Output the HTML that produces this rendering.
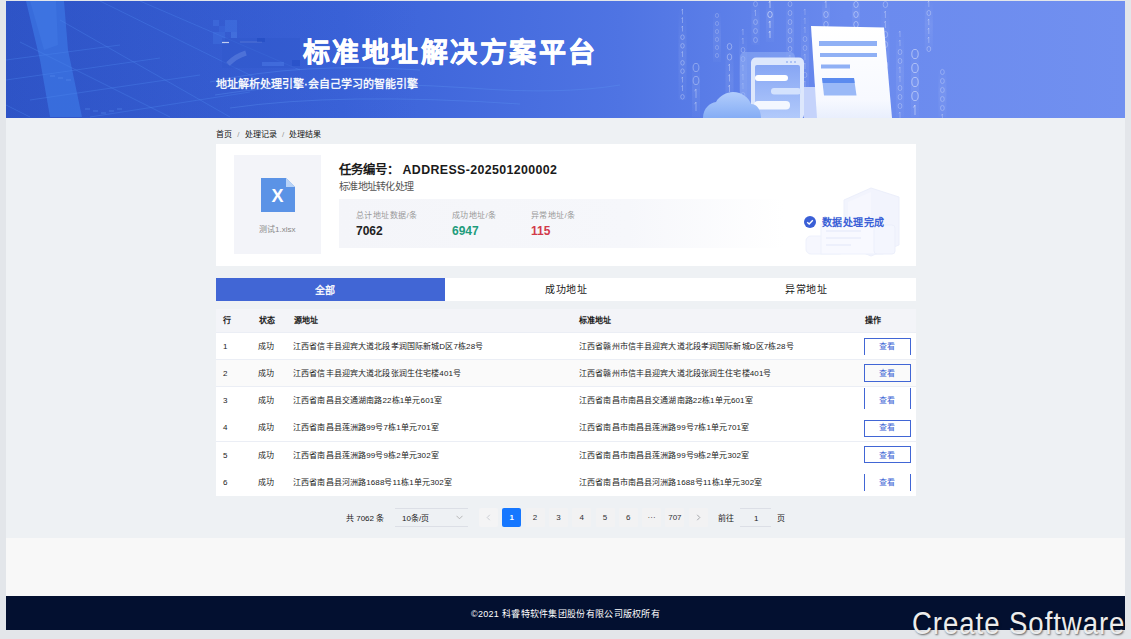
<!DOCTYPE html>
<html lang="zh-CN"><head><meta charset="utf-8">
<style>
*{margin:0;padding:0;box-sizing:border-box}
html,body{width:1131px;height:639px;overflow:hidden;background:#e3e6ea;font-family:"Liberation Sans",sans-serif}
.abs{position:absolute}
#page{position:absolute;left:6px;top:1px;width:1119px;height:629px;background:#eef1f4;overflow:hidden}
#banner{position:absolute;left:0;top:0;width:1119px;height:117px;background:linear-gradient(90deg,#2f55c8 0%,#3a62d8 30%,#4f74e3 55%,#6a8aee 75%,#7190f0 100%);overflow:hidden}
#lower{position:absolute;left:0;top:537px;width:1119px;height:58px;background:#f8f8f8}
#footer{position:absolute;left:0;top:595px;width:1119px;height:34px;background:#031030;color:#fff;font-size:9px}
.t{position:absolute;white-space:nowrap;line-height:1}
#table .t{margin-top:0.7px;letter-spacing:0.13px}
#pager .t{margin-top:1px}
#footer .t{margin-top:1px;letter-spacing:0.3px}
</style></head><body>
<div id="page">
  <div id="banner">

    <svg class="abs" style="left:0;top:0" width="1119" height="117" viewBox="6 1 1119 117">
      <defs>
        <linearGradient id="col" x1="0" y1="0" x2="1" y2="0"><stop offset="0" stop-color="#4a8ae8" stop-opacity="0"/><stop offset="0.3" stop-color="#4a8ae8" stop-opacity="0.35"/><stop offset="0.7" stop-color="#4a8ae8" stop-opacity="0.35"/><stop offset="1" stop-color="#4a8ae8" stop-opacity="0"/></linearGradient>
        <linearGradient id="cloud" x1="0" y1="0" x2="0" y2="1"><stop offset="0" stop-color="#b2cdfc"/><stop offset="1" stop-color="#85adf5"/></linearGradient>
        <linearGradient id="scr" x1="0" y1="0" x2="0" y2="1"><stop offset="0" stop-color="#87a6f4"/><stop offset="1" stop-color="#b3cbfb"/></linearGradient>
        <linearGradient id="paper" x1="0" y1="0" x2="0" y2="1"><stop offset="0" stop-color="#ffffff"/><stop offset="0.8" stop-color="#f7f9ff"/><stop offset="1" stop-color="#e9effd"/></linearGradient>
        <linearGradient id="dk" x1="0" y1="0" x2="1" y2="0"><stop offset="0" stop-color="#2548b8" stop-opacity="0.1"/><stop offset="0.6" stop-color="#2548b8" stop-opacity="0.08"/><stop offset="1" stop-color="#2548b8" stop-opacity="0"/></linearGradient>
        <linearGradient id="glowv" x1="0" y1="0" x2="0" y2="1"><stop offset="0" stop-color="#fff" stop-opacity="0"/><stop offset="0.5" stop-color="#fff" stop-opacity="0.07"/><stop offset="1" stop-color="#fff" stop-opacity="0.02"/></linearGradient>
        <linearGradient id="glow" x1="0" y1="0" x2="0" y2="1"><stop offset="0" stop-color="#fff" stop-opacity="0"/><stop offset="1" stop-color="#fff" stop-opacity="0.18"/></linearGradient>
      </defs>
      <!-- dark tech region left -->
      <rect x="6" y="1" width="420" height="117" fill="url(#dk)"/>
      <path d="M26 1H64L68 50L82 117H50L40 60Z" fill="#3d7ae6" fill-opacity="0.65"/>
      <path d="M30 1H56L58 45L44 50Z" fill="#4a86ee" fill-opacity="0.25"/>
      <g stroke="#4d86ee" stroke-opacity="0.35" stroke-width="1" fill="none">
        <path d="M20 42L170 117M100 1L260 80M140 1L300 70M60 20L230 117M6 105L30 117"/>
        <path d="M6 60L120 45M6 80L160 58M30 100L200 75M90 117L250 92"/>
      </g>
      <g fill="#5a90f0" fill-opacity="0.25">
        <rect x="50" y="75" width="5" height="2"/><rect x="58" y="77" width="5" height="2"/><rect x="66" y="79" width="5" height="2"/>
        <rect x="85" y="108" width="5" height="2"/><rect x="93" y="110" width="5" height="2"/><rect x="101" y="112" width="5" height="2"/><rect x="109" y="110" width="5" height="2"/><rect x="117" y="108" width="5" height="2"/>
      </g>
      <g stroke="#5b93f2" stroke-opacity="0.35" fill="none">
        <path d="M210 82Q300 62 420 70"/>
        <path d="M215 95Q320 78 470 88Q560 95 620 85"/>
        <path d="M230 108Q340 92 520 104"/>
      </g>
      <!-- mosaic logo -->
      <g fill-opacity="0.35">
      <rect x="213" y="20" width="6" height="6" fill="#4a7ce8"/><rect x="219" y="26" width="6" height="6" fill="#3e6ee0"/>
      <rect x="225" y="20" width="12" height="12" fill="#4b80ea"/><rect x="231" y="32" width="6" height="6" fill="#5a8ff0"/>
      <rect x="213" y="32" width="12" height="12" fill="#4678e6"/>
      </g>
      <rect x="222" y="38" width="78" height="30" fill="#2f58cc" fill-opacity="0.5"/>
      <path d="M222 42.5H229" stroke="#fff" stroke-opacity="0.7" stroke-width="1.2"/><path d="M240 42H262" stroke="#fff" stroke-opacity="0.15" stroke-width="1"/><rect x="257" y="38" width="8" height="4" fill="#1d48c0" fill-opacity="0.5"/><rect x="292" y="60" width="8" height="6" fill="#1d48c0" fill-opacity="0.4"/>
      <path d="M228 64Q236 56 246 53" stroke="#8aaaf0" stroke-opacity="0.3" stroke-width="5" fill="none"/>
      <rect x="262" y="62" width="22" height="4" fill="#5a8af0" fill-opacity="0.35"/>
            <rect x="678.5" y="8" width="8" height="92" fill="url(#glowv)"/>
      <ellipse cx="682.5" cy="37.2" rx="1.76" ry="2.35" fill="none" stroke="#fff" stroke-opacity="0.35" stroke-width="0.8"/>
      <ellipse cx="682.5" cy="45.8" rx="1.76" ry="2.35" fill="none" stroke="#fff" stroke-opacity="0.35" stroke-width="0.8"/>
      <ellipse cx="682.5" cy="62.8" rx="1.76" ry="2.35" fill="none" stroke="#fff" stroke-opacity="0.35" stroke-width="0.8"/>
      <ellipse cx="682.5" cy="71.2" rx="1.76" ry="2.35" fill="none" stroke="#fff" stroke-opacity="0.35" stroke-width="0.8"/>
      <ellipse cx="682.5" cy="96.8" rx="1.76" ry="2.35" fill="none" stroke="#fff" stroke-opacity="0.35" stroke-width="0.8"/>
      <path d="M681.6 10.4L682.5 9.0V14.5M681.6 18.9L682.5 17.5V23.0M681.6 27.4L682.5 26.0V31.5M681.6 52.9L682.5 51.5V57.0M681.6 78.4L682.5 77.0V82.5M681.6 86.9L682.5 85.5V91.0" fill="none" stroke="#fff" stroke-opacity="0.35" stroke-width="0.8"/>
      <rect x="692" y="62" width="8" height="55" fill="url(#glowv)"/>
      <ellipse cx="696" cy="67.5" rx="2.88" ry="4.10" fill="none" stroke="#fff" stroke-opacity="0.4" stroke-width="0.8"/>
      <ellipse cx="696" cy="80.5" rx="2.88" ry="4.10" fill="none" stroke="#fff" stroke-opacity="0.4" stroke-width="0.8"/>
      <path d="M694.6 91.2L696.0 89.0V98.0M694.6 104.2L696.0 102.0V111.0" fill="none" stroke="#fff" stroke-opacity="0.4" stroke-width="0.8"/>
      <rect x="713" y="12" width="8" height="50" fill="url(#glowv)"/>
      <ellipse cx="717" cy="15.5" rx="1.60" ry="2.10" fill="none" stroke="#fff" stroke-opacity="0.25" stroke-width="0.8"/>
      <ellipse cx="717" cy="23.5" rx="1.60" ry="2.10" fill="none" stroke="#fff" stroke-opacity="0.25" stroke-width="0.8"/>
      <ellipse cx="717" cy="31.5" rx="1.60" ry="2.10" fill="none" stroke="#fff" stroke-opacity="0.25" stroke-width="0.8"/>
      <ellipse cx="717" cy="39.5" rx="1.60" ry="2.10" fill="none" stroke="#fff" stroke-opacity="0.25" stroke-width="0.8"/>
      <ellipse cx="717" cy="47.5" rx="1.60" ry="2.10" fill="none" stroke="#fff" stroke-opacity="0.25" stroke-width="0.8"/>
      <ellipse cx="717" cy="55.5" rx="1.60" ry="2.10" fill="none" stroke="#fff" stroke-opacity="0.25" stroke-width="0.8"/>
      <rect x="725.5" y="42" width="8" height="75" fill="url(#glowv)"/>
      <ellipse cx="729.5" cy="46.5" rx="2.24" ry="3.10" fill="none" stroke="#fff" stroke-opacity="0.4" stroke-width="0.8"/>
      <ellipse cx="729.5" cy="57.0" rx="2.24" ry="3.10" fill="none" stroke="#fff" stroke-opacity="0.4" stroke-width="0.8"/>
      <ellipse cx="729.5" cy="99.0" rx="2.24" ry="3.10" fill="none" stroke="#fff" stroke-opacity="0.4" stroke-width="0.8"/>
      <ellipse cx="729.5" cy="109.5" rx="2.24" ry="3.10" fill="none" stroke="#fff" stroke-opacity="0.4" stroke-width="0.8"/>
      <path d="M728.4 65.8L729.5 64.0V71.0M728.4 76.2L729.5 74.5V81.5M728.4 86.8L729.5 85.0V92.0" fill="none" stroke="#fff" stroke-opacity="0.4" stroke-width="0.8"/>
      <rect x="739" y="28" width="8" height="89" fill="url(#glowv)"/>
      <ellipse cx="743" cy="50.0" rx="1.92" ry="2.60" fill="none" stroke="#fff" stroke-opacity="0.28" stroke-width="0.8"/>
      <ellipse cx="743" cy="59.0" rx="1.92" ry="2.60" fill="none" stroke="#fff" stroke-opacity="0.28" stroke-width="0.8"/>
      <ellipse cx="743" cy="95.0" rx="1.92" ry="2.60" fill="none" stroke="#fff" stroke-opacity="0.28" stroke-width="0.8"/>
      <path d="M742.0 30.5L743.0 29.0V35.0M742.0 39.5L743.0 38.0V44.0M742.0 66.5L743.0 65.0V71.0M742.0 75.5L743.0 74.0V80.0M742.0 84.5L743.0 83.0V89.0M742.0 102.5L743.0 101.0V107.0M742.0 111.5L743.0 110.0V116.0" fill="none" stroke="#fff" stroke-opacity="0.28" stroke-width="0.8"/>
      <rect x="751.5" y="0" width="8" height="45" fill="url(#glowv)"/>
      <ellipse cx="755.5" cy="4.0" rx="1.92" ry="2.60" fill="none" stroke="#fff" stroke-opacity="0.3" stroke-width="0.8"/>
      <ellipse cx="755.5" cy="22.0" rx="1.92" ry="2.60" fill="none" stroke="#fff" stroke-opacity="0.3" stroke-width="0.8"/>
      <ellipse cx="755.5" cy="31.0" rx="1.92" ry="2.60" fill="none" stroke="#fff" stroke-opacity="0.3" stroke-width="0.8"/>
      <ellipse cx="755.5" cy="40.0" rx="1.92" ry="2.60" fill="none" stroke="#fff" stroke-opacity="0.3" stroke-width="0.8"/>
      <path d="M754.5 11.5L755.5 10.0V16.0" fill="none" stroke="#fff" stroke-opacity="0.3" stroke-width="0.8"/>
      <rect x="766" y="0" width="8" height="42" fill="url(#glowv)"/>
      <ellipse cx="770" cy="14.5" rx="2.24" ry="3.10" fill="none" stroke="#fff" stroke-opacity="0.6" stroke-width="0.8"/>
      <path d="M768.9 2.8L770.0 1.0V8.0M768.9 22.8L770.0 21.0V28.0M768.9 32.8L770.0 31.0V38.0" fill="none" stroke="#fff" stroke-opacity="0.6" stroke-width="0.8"/>
      <rect x="786" y="0" width="8" height="62" fill="url(#glowv)"/>
      <ellipse cx="790" cy="4.0" rx="1.92" ry="2.60" fill="none" stroke="#fff" stroke-opacity="0.3" stroke-width="0.8"/>
      <ellipse cx="790" cy="13.0" rx="1.92" ry="2.60" fill="none" stroke="#fff" stroke-opacity="0.3" stroke-width="0.8"/>
      <ellipse cx="790" cy="22.0" rx="1.92" ry="2.60" fill="none" stroke="#fff" stroke-opacity="0.3" stroke-width="0.8"/>
      <ellipse cx="790" cy="31.0" rx="1.92" ry="2.60" fill="none" stroke="#fff" stroke-opacity="0.3" stroke-width="0.8"/>
      <ellipse cx="790" cy="40.0" rx="1.92" ry="2.60" fill="none" stroke="#fff" stroke-opacity="0.3" stroke-width="0.8"/>
      <ellipse cx="790" cy="49.0" rx="1.92" ry="2.60" fill="none" stroke="#fff" stroke-opacity="0.3" stroke-width="0.8"/>
      <path d="M789.0 56.5L790.0 55.0V61.0" fill="none" stroke="#fff" stroke-opacity="0.3" stroke-width="0.8"/>
      <rect x="801" y="8" width="8" height="102" fill="url(#glowv)"/>
      <ellipse cx="805" cy="39.0" rx="1.92" ry="2.60" fill="none" stroke="#fff" stroke-opacity="0.25" stroke-width="0.8"/>
      <ellipse cx="805" cy="48.0" rx="1.92" ry="2.60" fill="none" stroke="#fff" stroke-opacity="0.25" stroke-width="0.8"/>
      <ellipse cx="805" cy="75.0" rx="1.92" ry="2.60" fill="none" stroke="#fff" stroke-opacity="0.25" stroke-width="0.8"/>
      <ellipse cx="805" cy="102.0" rx="1.92" ry="2.60" fill="none" stroke="#fff" stroke-opacity="0.25" stroke-width="0.8"/>
      <path d="M804.0 10.5L805.0 9.0V15.0M804.0 19.5L805.0 18.0V24.0M804.0 28.5L805.0 27.0V33.0M804.0 55.5L805.0 54.0V60.0M804.0 64.5L805.0 63.0V69.0M804.0 82.5L805.0 81.0V87.0M804.0 91.5L805.0 90.0V96.0" fill="none" stroke="#fff" stroke-opacity="0.25" stroke-width="0.8"/>
      <rect x="822" y="0" width="8" height="26" fill="url(#glowv)"/>
      <ellipse cx="826" cy="14.5" rx="2.24" ry="3.10" fill="none" stroke="#fff" stroke-opacity="0.4" stroke-width="0.8"/>
      <ellipse cx="826" cy="24.5" rx="2.24" ry="3.10" fill="none" stroke="#fff" stroke-opacity="0.4" stroke-width="0.8"/>
      <path d="M824.9 2.8L826.0 1.0V8.0" fill="none" stroke="#fff" stroke-opacity="0.4" stroke-width="0.8"/>
      <rect x="852" y="0" width="8" height="26" fill="url(#glowv)"/>
      <ellipse cx="856" cy="4.5" rx="2.24" ry="3.10" fill="none" stroke="#fff" stroke-opacity="0.45" stroke-width="0.8"/>
      <ellipse cx="856" cy="14.5" rx="2.24" ry="3.10" fill="none" stroke="#fff" stroke-opacity="0.45" stroke-width="0.8"/>
      <ellipse cx="856" cy="24.5" rx="2.24" ry="3.10" fill="none" stroke="#fff" stroke-opacity="0.45" stroke-width="0.8"/>
      <rect x="881.4" y="0" width="8" height="110" fill="url(#glowv)"/>
      <ellipse cx="885.4" cy="4.5" rx="2.24" ry="3.10" fill="none" stroke="#fff" stroke-opacity="0.35" stroke-width="0.8"/>
      <ellipse cx="885.4" cy="34.5" rx="2.24" ry="3.10" fill="none" stroke="#fff" stroke-opacity="0.35" stroke-width="0.8"/>
      <ellipse cx="885.4" cy="44.5" rx="2.24" ry="3.10" fill="none" stroke="#fff" stroke-opacity="0.35" stroke-width="0.8"/>
      <ellipse cx="885.4" cy="64.5" rx="2.24" ry="3.10" fill="none" stroke="#fff" stroke-opacity="0.35" stroke-width="0.8"/>
      <ellipse cx="885.4" cy="74.5" rx="2.24" ry="3.10" fill="none" stroke="#fff" stroke-opacity="0.35" stroke-width="0.8"/>
      <ellipse cx="885.4" cy="104.5" rx="2.24" ry="3.10" fill="none" stroke="#fff" stroke-opacity="0.35" stroke-width="0.8"/>
      <path d="M884.3 12.8L885.4 11.0V18.0M884.3 22.8L885.4 21.0V28.0M884.3 52.8L885.4 51.0V58.0M884.3 82.8L885.4 81.0V88.0M884.3 92.8L885.4 91.0V98.0" fill="none" stroke="#fff" stroke-opacity="0.35" stroke-width="0.8"/>
      <rect x="896" y="30" width="8" height="87" fill="url(#glowv)"/>
      <ellipse cx="900" cy="52.0" rx="1.92" ry="2.60" fill="none" stroke="#fff" stroke-opacity="0.3" stroke-width="0.8"/>
      <ellipse cx="900" cy="61.0" rx="1.92" ry="2.60" fill="none" stroke="#fff" stroke-opacity="0.3" stroke-width="0.8"/>
      <ellipse cx="900" cy="88.0" rx="1.92" ry="2.60" fill="none" stroke="#fff" stroke-opacity="0.3" stroke-width="0.8"/>
      <ellipse cx="900" cy="97.0" rx="1.92" ry="2.60" fill="none" stroke="#fff" stroke-opacity="0.3" stroke-width="0.8"/>
      <ellipse cx="900" cy="106.0" rx="1.92" ry="2.60" fill="none" stroke="#fff" stroke-opacity="0.3" stroke-width="0.8"/>
      <path d="M899.0 32.5L900.0 31.0V37.0M899.0 41.5L900.0 40.0V46.0M899.0 68.5L900.0 67.0V73.0M899.0 77.5L900.0 76.0V82.0M899.0 113.5L900.0 112.0V118.0" fill="none" stroke="#fff" stroke-opacity="0.3" stroke-width="0.8"/>
      <rect x="911" y="48" width="8" height="69" fill="url(#glowv)"/>
      <ellipse cx="915" cy="54.0" rx="3.20" ry="4.60" fill="none" stroke="#fff" stroke-opacity="0.55" stroke-width="0.8"/>
      <ellipse cx="915" cy="68.0" rx="3.20" ry="4.60" fill="none" stroke="#fff" stroke-opacity="0.55" stroke-width="0.8"/>
      <ellipse cx="915" cy="82.0" rx="3.20" ry="4.60" fill="none" stroke="#fff" stroke-opacity="0.55" stroke-width="0.8"/>
      <ellipse cx="915" cy="96.0" rx="3.20" ry="4.60" fill="none" stroke="#fff" stroke-opacity="0.55" stroke-width="0.8"/>
      <path d="M913.4 107.5L915.0 105.0V115.0" fill="none" stroke="#fff" stroke-opacity="0.55" stroke-width="0.8"/>
      <rect x="924.8" y="0" width="8" height="50" fill="url(#glowv)"/>
      <ellipse cx="928.8" cy="13.0" rx="1.92" ry="2.60" fill="none" stroke="#fff" stroke-opacity="0.35" stroke-width="0.8"/>
      <ellipse cx="928.8" cy="49.0" rx="1.92" ry="2.60" fill="none" stroke="#fff" stroke-opacity="0.35" stroke-width="0.8"/>
      <path d="M927.8 2.5L928.8 1.0V7.0M927.8 20.5L928.8 19.0V25.0M927.8 29.5L928.8 28.0V34.0M927.8 38.5L928.8 37.0V43.0" fill="none" stroke="#fff" stroke-opacity="0.35" stroke-width="0.8"/>
      <rect x="938.4" y="68" width="8" height="49" fill="url(#glowv)"/>
      <ellipse cx="942.4" cy="72.0" rx="1.92" ry="2.60" fill="none" stroke="#fff" stroke-opacity="0.3" stroke-width="0.8"/>
      <ellipse cx="942.4" cy="81.0" rx="1.92" ry="2.60" fill="none" stroke="#fff" stroke-opacity="0.3" stroke-width="0.8"/>
      <ellipse cx="942.4" cy="90.0" rx="1.92" ry="2.60" fill="none" stroke="#fff" stroke-opacity="0.3" stroke-width="0.8"/>
      <ellipse cx="942.4" cy="99.0" rx="1.92" ry="2.60" fill="none" stroke="#fff" stroke-opacity="0.3" stroke-width="0.8"/>
      <ellipse cx="942.4" cy="108.0" rx="1.92" ry="2.60" fill="none" stroke="#fff" stroke-opacity="0.3" stroke-width="0.8"/>
      <path d="M941.4 115.5L942.4 114.0V120.0" fill="none" stroke="#fff" stroke-opacity="0.3" stroke-width="0.8"/>
      <!-- illustration -->
      <rect x="740" y="52" width="55" height="70" rx="5" fill="#9bb8f8" fill-opacity="0.45"/>
      <rect x="804" y="87" width="14" height="31" fill="#c5d3fb"/>
      <rect x="751" y="57.5" width="53" height="62" rx="5" fill="#dde7fc"/>
      <rect x="755" y="65" width="45" height="55" rx="2" fill="url(#scr)"/>
      <circle cx="787" cy="62" r="1" fill="#9db7f5"/><circle cx="791" cy="62" r="1" fill="#9db7f5"/><circle cx="795" cy="62" r="1" fill="#9db7f5"/>
      <rect x="755" y="75" width="33" height="6" rx="3" fill="#fff"/>
      <rect x="771" y="88" width="30" height="6.5" rx="3" fill="#d4e2fd"/>
      <rect x="754" y="101" width="36" height="8.5" rx="4" fill="#f4f7ff"/>
      <path d="M703 118C703 108 710 103 716 102C719 96 727 92 733 92C742 92 749 98 751 104C757 104 761 110 761 118Z" fill="url(#cloud)"/>
      <path d="M811 26L884 27.5L892 118H817Z" fill="url(#paper)"/>
      <rect x="819" y="41" width="58" height="5" fill="#8fb0f5"/>
      <rect x="820" y="53" width="57" height="4" fill="#8fb0f5"/>
      <rect x="821" y="64.5" width="29" height="4" fill="#8fb0f5"/>
      <path d="M822 78H854L856.5 95.5H824Z" fill="#9ab9f7"/>
      <path d="M822 78H854L854.7 83H822.7Z" fill="#5b8bef"/>
    </svg>
    <div class="t" style="left:297px;top:38.5px;font-size:27px;font-weight:bold;color:#fff;letter-spacing:2.45px;-webkit-text-stroke:0.6px #fff">标准地址解决方案平台</div>
    <div class="t" style="left:210px;top:77.5px;font-size:11px;color:#fff;-webkit-text-stroke:0.3px #fff">地址解析处理引擎·会自己学习的智能引擎</div>
  </div>

  <div class="t" id="bc" style="left:210px;top:129.5px;font-size:8px;color:#111">首页 <span style="color:#999;margin:0 3px">/</span> 处理记录 <span style="color:#999;margin:0 3px">/</span> 处理结果</div>
  <div id="card" class="abs" style="left:210px;top:143px;width:700px;height:122px;background:#fff">
    <div class="abs" style="left:18px;top:11px;width:87px;height:99px;background:#f3f4f9">
      <svg class="abs" style="left:27px;top:23px" width="34" height="34" viewBox="0 0 34 34">
        <path d="M0 0H25L34 9V34H0Z" fill="#5b93e6"/>
        <path d="M25 0L34 9H25Z" fill="#b9d3f7"/>
        <text x="16.5" y="23.5" font-family="Liberation Sans" font-weight="bold" font-size="18" fill="#fff" text-anchor="middle">X</text>
      </svg>
      <div class="t" style="left:25px;top:70.5px;font-size:8px;color:#888">测试1.xlsx</div>
    </div>
    <div class="t" id="title" style="left:123px;top:20px;font-size:12.4px;font-weight:bold;color:#1a1a1a">任务编号：<span style="margin-left:3.5px;letter-spacing:0.37px">ADDRESS-202501200002</span></div>
    <div class="t" id="sub" style="left:123px;top:37.8px;font-size:10px;letter-spacing:-0.75px;color:#555">标准地址转化处理</div>
    <div class="abs" style="left:123px;top:55px;width:445px;height:49px;background:linear-gradient(90deg,#f4f5f9 0%,#f6f7fb 65%,#fff 100%)"></div>
    <div class="t" style="left:140px;top:68px;font-size:8px;letter-spacing:0.4px;color:#999">总计地址数据/条</div>
    <div class="t" style="left:140px;top:81px;font-size:12px;font-weight:bold;color:#222">7062</div>
    <div class="t" style="left:236px;top:68px;font-size:8px;letter-spacing:0.4px;color:#999">成功地址/条</div>
    <div class="t" style="left:236px;top:81px;font-size:12px;font-weight:bold;color:#1e9c7c">6947</div>
    <div class="t" style="left:315px;top:68px;font-size:8px;letter-spacing:0.4px;color:#999">异常地址/条</div>
    <div class="t" style="left:315px;top:81px;font-size:12px;font-weight:bold;color:#d23a4b">115</div>
    <svg class="abs" style="left:585px;top:40px" width="105" height="75" viewBox="800 184 105 75">
      <path d="M843 200L870 188L898 197V245L870 256L843 245Z" fill="#f2f4fd" stroke="#eceffb" stroke-width="1"/>
      <path d="M847 202L870 192L870 252L847 243Z" fill="#f6f7fe"/>
      <rect x="805" y="236" width="38" height="18" rx="5" fill="#f6f7fe" stroke="#eef1fc"/>
      <rect x="820" y="224" width="62" height="30" fill="#f8f9ff" stroke="#eef1fc"/>
      <rect x="873" y="225" width="21" height="29" rx="3" fill="#f4f6fe" stroke="#eceffb"/>
      <path d="M825 231H860M825 238H860M825 245H850" stroke="#e9edfb" stroke-width="1.5"/>
    </svg>
    <svg class="abs" style="left:588px;top:72px" width="12" height="12" viewBox="0 0 12 12"><circle cx="6" cy="6" r="6" fill="#3a5fd6"/><path d="M3.2 6.2L5.2 8L8.8 4.2" stroke="#fff" stroke-width="1.4" fill="none"/></svg>
    <div class="t" style="left:606px;top:73.5px;font-size:10px;letter-spacing:0.45px;font-weight:bold;color:#3a5fd6">数据处理完成</div>
  </div>
  <div id="tabs" class="abs" style="left:210px;top:277px;width:700px;height:23px;background:#fff">
    <div class="abs" style="left:0;top:0;width:229px;height:23px;background:#4166d5"></div>
    <div class="t" style="left:98.5px;top:7.5px;font-size:10px;letter-spacing:0.6px;color:#fff;-webkit-text-stroke:0.3px #fff">全部</div>
    <div class="t" style="left:329px;top:7px;font-size:10px;letter-spacing:0.5px;color:#1a1a1a">成功地址</div>
    <div class="t" style="left:569px;top:7px;font-size:10px;letter-spacing:0.7px;color:#1a1a1a">异常地址</div>
  </div>
  <div id="table" class="abs" style="left:210px;top:308px;width:700px;height:187px;background:#fff;font-size:8px;color:#1a1a1a">
    <div class="abs" style="left:0;top:0;width:700px;height:23px;background:#f3f4f8"></div>
    <div class="t" style="left:7px;top:7.4px;font-weight:bold">行</div>
    <div class="t" style="left:42.5px;top:7.4px;font-weight:bold">状态</div>
    <div class="t" style="left:78px;top:7.4px;font-weight:bold">源地址</div>
    <div class="t" style="left:363px;top:7.4px;font-weight:bold">标准地址</div>
    <div class="t" style="left:648.5px;top:7.4px;font-weight:bold">操作</div>
    <div class="abs" style="left:0;top:23px;width:700px;height:27px;background:#fff;border-top:1px solid #ebeef5"></div>
    <div class="t" style="left:7px;top:33px">1</div>
    <div class="t" style="left:42px;top:33px">成功</div>
    <div class="t" style="left:77px;top:33px">江西省信丰县迎宾大道北段孝润国际新城D区7栋28号</div>
    <div class="t" style="left:363px;top:33px">江西省赣州市信丰县迎宾大道北段孝润国际新城D区7栋28号</div>
    <div class="abs" style="left:648px;top:28.5px;width:47px;height:17px;border:1px solid #4166d5;border-bottom:0"></div>
    <div class="t" style="left:663px;top:33px;color:#4166d5">查看</div>
    <div class="abs" style="left:0;top:50px;width:700px;height:27px;background:#fafafa;border-top:1px solid #ebeef5"></div>
    <div class="t" style="left:7px;top:60px">2</div>
    <div class="t" style="left:42px;top:60px">成功</div>
    <div class="t" style="left:77px;top:60px">江西省信丰县迎宾大道北段张润生住宅楼401号</div>
    <div class="t" style="left:363px;top:60px">江西省赣州市信丰县迎宾大道北段张润生住宅楼401号</div>
    <div class="abs" style="left:648px;top:55px;width:47px;height:17.5px;border:1px solid #4166d5"></div>
    <div class="t" style="left:663px;top:60px;color:#4166d5">查看</div>
    <div class="abs" style="left:0;top:77px;width:700px;height:27px;background:#fff;border-top:1px solid #ebeef5"></div>
    <div class="t" style="left:7px;top:87px">3</div>
    <div class="t" style="left:42px;top:87px">成功</div>
    <div class="t" style="left:77px;top:87px">江西省南昌县交通湖南路22栋1单元601室</div>
    <div class="t" style="left:363px;top:87px">江西省南昌市南昌县交通湖南路22栋1单元601室</div>
    <div class="abs" style="left:648px;top:78.5px;width:47px;height:21.5px;border:1px solid #4166d5;border-top:0;border-bottom:0"></div>
    <div class="t" style="left:663px;top:87px;color:#4166d5">查看</div>
    <div class="abs" style="left:0;top:104px;width:700px;height:28px;background:#fff"></div>
    <div class="t" style="left:7px;top:114px">4</div>
    <div class="t" style="left:42px;top:114px">成功</div>
    <div class="t" style="left:77px;top:114px">江西省南昌县莲洲路99号7栋1单元701室</div>
    <div class="t" style="left:363px;top:114px">江西省南昌市南昌县莲洲路99号7栋1单元701室</div>
    <div class="abs" style="left:648px;top:110.5px;width:47px;height:17px;border:1px solid #4166d5"></div>
    <div class="t" style="left:663px;top:114px;color:#4166d5">查看</div>
    <div class="abs" style="left:0;top:132px;width:700px;height:27px;background:#fff;border-top:1px solid #ebeef5"></div>
    <div class="t" style="left:7px;top:142px">5</div>
    <div class="t" style="left:42px;top:142px">成功</div>
    <div class="t" style="left:77px;top:142px">江西省南昌县莲洲路99号9栋2单元302室</div>
    <div class="t" style="left:363px;top:142px">江西省南昌市南昌县莲洲路99号9栋2单元302室</div>
    <div class="abs" style="left:648px;top:137px;width:47px;height:17px;border:1px solid #4166d5"></div>
    <div class="t" style="left:663px;top:142px;color:#4166d5">查看</div>
    <div class="abs" style="left:0;top:159px;width:700px;height:28px;background:#fff"></div>
    <div class="t" style="left:7px;top:169px">6</div>
    <div class="t" style="left:42px;top:169px">成功</div>
    <div class="t" style="left:77px;top:169px">江西省南昌县河洲路1688号11栋1单元302室</div>
    <div class="t" style="left:363px;top:169px">江西省南昌市南昌县河洲路1688号11栋1单元302室</div>
    <div class="abs" style="left:648px;top:164.5px;width:47px;height:17.5px;border:1px solid #4166d5;border-top:0;border-bottom:0"></div>
    <div class="t" style="left:663px;top:169px;color:#4166d5">查看</div>
  </div>
  <div id="pager" class="abs" style="left:0;top:0;font-size:8px;color:#1a1a1a">
    <div class="t" style="left:340px;top:513px">共 7062 条</div>
    <div class="abs" style="left:389px;top:507px;width:73px;height:19px;border:1px solid #dcdfe6;border-left:0;border-right:0"></div>
    <div class="t" style="left:396px;top:513px">10条/页</div>
    <svg class="abs" style="left:450px;top:514px" width="7" height="5" viewBox="0 0 7 5"><path d="M0.5 0.8L3.5 3.8L6.5 0.8" stroke="#aaa" stroke-width="0.8" fill="none"/></svg>
    <div class="abs" style="left:473.0px;top:507px;width:19px;height:19px;background:#f4f4f5;border-radius:2px;"><svg class="abs" style="left:6px;top:6px" width="7" height="7" viewBox="0 0 7 7"><path d="M4.8 0.8L2.2 3.5L4.8 6.2" stroke="#c0c4cc" stroke-width="0.8" fill="none"/></svg></div>
    <div class="abs" style="left:496.3px;top:507px;width:19px;height:19px;background:#1677ff;border-radius:2px;color:#fff;font-weight:bold;text-align:center;line-height:19px">1</div>
    <div class="abs" style="left:519.6px;top:507px;width:19px;height:19px;background:#f2f2f3;border-radius:2px;color:#303133;text-align:center;line-height:19px">2</div>
    <div class="abs" style="left:542.9px;top:507px;width:19px;height:19px;background:#f2f2f3;border-radius:2px;color:#303133;text-align:center;line-height:19px">3</div>
    <div class="abs" style="left:566.2px;top:507px;width:19px;height:19px;background:#f2f2f3;border-radius:2px;color:#303133;text-align:center;line-height:19px">4</div>
    <div class="abs" style="left:589.5px;top:507px;width:19px;height:19px;background:#f2f2f3;border-radius:2px;color:#303133;text-align:center;line-height:19px">5</div>
    <div class="abs" style="left:612.8px;top:507px;width:19px;height:19px;background:#f2f2f3;border-radius:2px;color:#303133;text-align:center;line-height:19px">6</div>
    <div class="abs" style="left:636.1px;top:507px;width:19px;height:19px;background:#f2f2f3;border-radius:2px;color:#303133;text-align:center;line-height:19px">···</div>
    <div class="abs" style="left:659.4px;top:507px;width:19px;height:19px;background:#f2f2f3;border-radius:2px;color:#303133;text-align:center;line-height:19px">707</div>
    <div class="abs" style="left:682.7px;top:507px;width:19px;height:19px;background:#f2f2f3;border-radius:2px;"><svg class="abs" style="left:6px;top:6px" width="7" height="7" viewBox="0 0 7 7"><path d="M2.2 0.8L4.8 3.5L2.2 6.2" stroke="#909399" stroke-width="0.8" fill="none"/></svg></div>
    <div class="t" style="left:712px;top:513px">前往</div>
    <div class="abs" style="left:734px;top:507px;width:31px;height:19px;border:1px solid #dcdfe6;border-left:0;border-right:0"></div>
    <div class="t" style="left:748px;top:513px">1</div>
    <div class="t" style="left:771px;top:513px">页</div>
  </div>
  <div id="lower"></div>
  <div id="footer">
    <div class="t" style="left:465px;top:13px">©2021 科睿特软件集团股份有限公司版权所有</div>
  </div>
</div>
<div class="t" id="wm" style="left:912px;top:608px;font-size:31px;letter-spacing:1.05px;color:#ececec;text-shadow:1px 1px 2px rgba(0,0,0,0.55);transform:scaleX(0.89);transform-origin:0 0">Create Software</div>
</body></html>
